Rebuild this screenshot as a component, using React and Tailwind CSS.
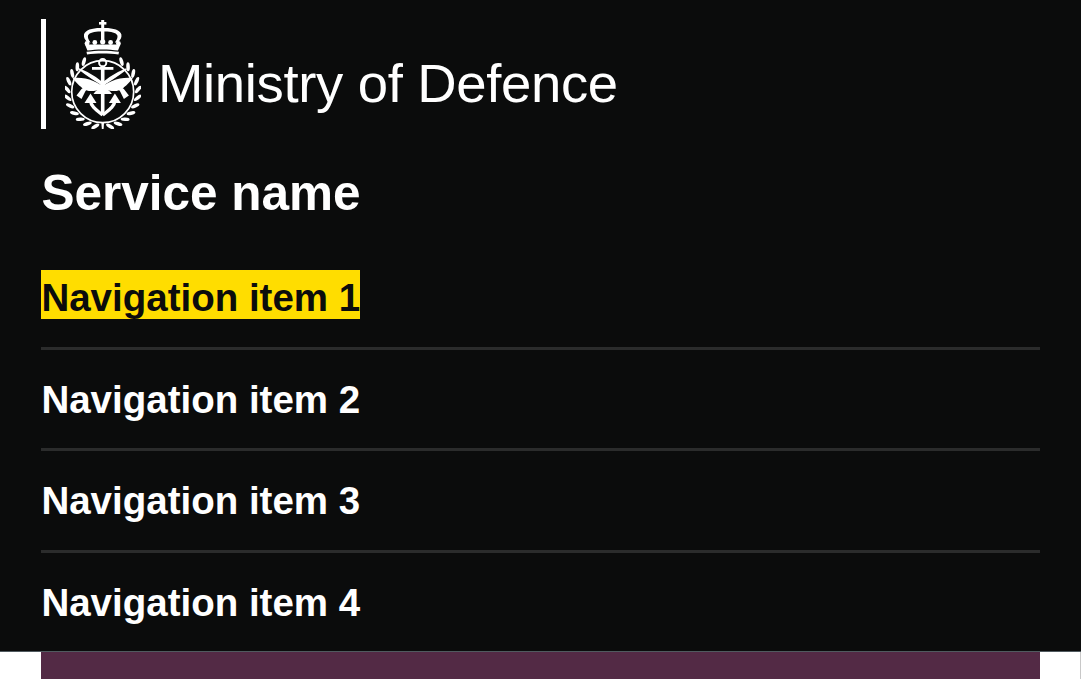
const navItems = ["Navigation item 1", "Navigation item 2", "Navigation item 3", "Navigation item 4"];

// wreath leaves, running up each side from the bottom of the badge
const leafAngles = Array.from({ length: 11 }, (_, i) => 168 - i * 13.6);

const Side = ({ flip }) => (
  <g transform={flip ? "translate(75.4 0) scale(-1 1)" : undefined}>
    {/* scimitar */}
    <path d="M14 50 C24 54 35 61 44 70 C34 64 24 58 14 50 Z" stroke="#fff" strokeWidth="1.4" />
    {/* wing-shaped blade */}
    <path d="M7.5 59 C20 57.5 33 62 42 71 C34 69.5 28 73.5 22 71.5 C16 69 12 64.5 7.5 59 Z" />
    {/* rifle */}
    <path d="M11.5 76.5 L16.5 70 L24 64.5 L26 67 L20.5 72 L16.5 80 Z" />
    <circle cx="18" cy="67.5" r="1.5" />
    {/* fluke */}
    <path d="M25.5 74.5 L19.5 84 L31.5 84 Z" />
    <path d="M25.5 82 C26 88 32 91.5 37.7 96" fill="none" stroke="#fff" strokeWidth="3.2" />
    {/* wreath */}
    {leafAngles.map((a) => (
      <ellipse key={a} cx="37.7" cy="37.2" rx="1.8" ry="4.5" transform={`rotate(${-a} 37.7 72.7) rotate(48 37.7 37.2)`} />
    ))}
  </g>
);

const Crest = () => (
  <svg viewBox="0 0 76 110" className="h-[110px] w-[76px]" fill="#fff">
    {/* crown */}
    <rect x="36.2" y="1" width="3" height="11" />
    <rect x="34" y="3" width="7.4" height="2.6" />
    <path d="M37.7 9 C29 8.5 20 10.5 19 15.5 C18.5 18.5 20 21 22.5 23.5 L25.5 23.5 C23.5 20.5 22.5 18.5 23 16.5 C24.5 13.5 30 12.5 36 12.6 L36 22 L39.4 22 L39.4 12.6 C45.4 12.5 50.9 13.5 52.4 16.5 C52.9 18.5 51.9 20.5 49.9 23.5 L52.9 23.5 C55.4 21 56.9 18.5 56.4 15.5 C55.4 10.5 46.4 8.5 37.7 9 Z" />
    <circle cx="22" cy="24.5" r="2.4" />
    <circle cx="29.8" cy="23.5" r="2.4" />
    <circle cx="37.7" cy="22.8" r="2.6" />
    <circle cx="45.6" cy="23.5" r="2.4" />
    <circle cx="53.4" cy="24.5" r="2.4" />
    <path d="M20 25.5 L55.4 25.5 L53 31.5 C44 30 31 30 22.4 31.5 Z" />
    <path d="M21.5 32.8 C31 31.3 44 31.3 54 32.8 L53.5 35.6 C44 34.2 31 34.2 22 35.6 Z" />
    {/* badge ring */}
    <circle cx="37.7" cy="72.7" r="31" fill="none" stroke="#fff" strokeWidth="1.7" />
    <Side />
    <Side flip />
    {/* anchor */}
    <circle cx="37.7" cy="43.7" r="3.6" fill="none" stroke="#fff" strokeWidth="2" />
    <rect x="35.9" y="47" width="3.6" height="47" />
    <rect x="27" y="48" width="21.4" height="2.8" />
    <path d="M28.5 75 C32 67.5 43.4 67.5 46.9 75 Z" />
    {/* stem under the wreath */}
    <path d="M36.4 104 L39 104 L38.6 110 L36.8 110 Z" />
  </svg>
);

export default function App() {
  return (
    <div className="min-h-[679px] overflow-hidden bg-white font-['Liberation_Sans',Arial,sans-serif]">
      <header className="h-[652px] overflow-hidden border-b border-[#505a5f] bg-[#0b0c0c] px-[41.4px] pt-[19px] text-white">
        <div className="flex h-[110px] items-center">
          <div className="h-[110px] w-[5px] bg-white" />
          <div className="ml-[18.6px]">
            <Crest />
          </div>
          <span className="ml-[17px] mt-[20px] text-[54.5px] leading-none tracking-[-0.35px]">Ministry of Defence</span>
        </div>
        <div className="mt-[34px] text-[49.5px] font-bold leading-[60px]">Service name</div>
        <nav className="mt-[25px]">
          {navItems.map((item, i) => (
            <div key={item} className={`h-[101.5px] pt-[22px] text-[38.5px] font-bold leading-[55px] ${i < 3 ? "border-b-[3px] border-[#2b2c2c]" : ""}`}>
              <a href="#" className={i === 0 ? "block h-[49px] w-fit bg-[#ffdd00] text-[#0b0c0c]" : "block h-[49px] w-fit text-white"}>{item}</a>
            </div>
          ))}
        </nav>
      </header>
      <div className="h-[27px] border-r border-[#c8c8c8] pl-[41.4px] pr-[40.4px]">
        <div className="h-full bg-[#532a45]" />
      </div>
    </div>
  );
}
